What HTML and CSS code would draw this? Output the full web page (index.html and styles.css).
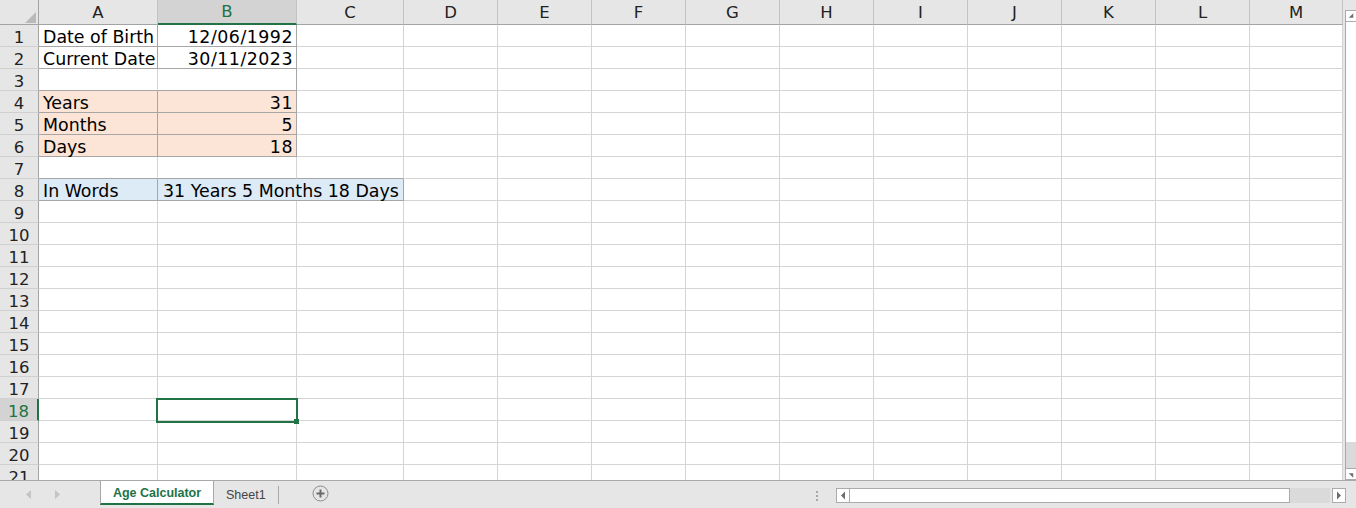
FILE: index.html
```html
<!DOCTYPE html>
<html>
<head>
<meta charset="utf-8">
<link rel="stylesheet" href="styles.css">
</head>
<body>
<div class="app">
  <div class="main">
    <div class="sheet">
      <div class="grid">
        <div class="corner"><svg width="38" height="24" viewBox="0 0 38 24"><polygon points="36,12 36,23 25,23" fill="#b9b9b9"/></svg></div>
        <div class="ch">A</div><div class="ch sel">B</div><div class="ch">C</div><div class="ch">D</div><div class="ch">E</div><div class="ch">F</div><div class="ch">G</div><div class="ch">H</div><div class="ch">I</div><div class="ch">J</div><div class="ch">K</div><div class="ch">L</div><div class="ch">M</div>

        <div class="rh">1</div><div class="c bd">Date of Birth</div><div class="c bd n">12/06/1992</div><div class="c"></div><div class="c"></div><div class="c"></div><div class="c"></div><div class="c"></div><div class="c"></div><div class="c"></div><div class="c"></div><div class="c"></div><div class="c"></div><div class="c"></div>
        <div class="rh">2</div><div class="c bd">Current Date</div><div class="c bd n">30/11/2023</div><div class="c"></div><div class="c"></div><div class="c"></div><div class="c"></div><div class="c"></div><div class="c"></div><div class="c"></div><div class="c"></div><div class="c"></div><div class="c"></div><div class="c"></div>
        <div class="rh">3</div><div class="c bb"></div><div class="c bb br"></div><div class="c"></div><div class="c"></div><div class="c"></div><div class="c"></div><div class="c"></div><div class="c"></div><div class="c"></div><div class="c"></div><div class="c"></div><div class="c"></div><div class="c"></div>
        <div class="rh">4</div><div class="c bd org">Years</div><div class="c bd org n">31</div><div class="c"></div><div class="c"></div><div class="c"></div><div class="c"></div><div class="c"></div><div class="c"></div><div class="c"></div><div class="c"></div><div class="c"></div><div class="c"></div><div class="c"></div>
        <div class="rh">5</div><div class="c bd org">Months</div><div class="c bd org n">5</div><div class="c"></div><div class="c"></div><div class="c"></div><div class="c"></div><div class="c"></div><div class="c"></div><div class="c"></div><div class="c"></div><div class="c"></div><div class="c"></div><div class="c"></div>
        <div class="rh">6</div><div class="c bd org">Days</div><div class="c bd org n">18</div><div class="c"></div><div class="c"></div><div class="c"></div><div class="c"></div><div class="c"></div><div class="c"></div><div class="c"></div><div class="c"></div><div class="c"></div><div class="c"></div><div class="c"></div>
        <div class="rh">7</div><div class="c bb"></div><div class="c bb"></div><div class="c bb"></div><div class="c"></div><div class="c"></div><div class="c"></div><div class="c"></div><div class="c"></div><div class="c"></div><div class="c"></div><div class="c"></div><div class="c"></div><div class="c"></div>
        <div class="rh">8</div><div class="c bd blu">In Words</div><div class="c bd blu merge">31 Years 5 Months 18 Days</div><div class="c"></div><div class="c"></div><div class="c"></div><div class="c"></div><div class="c"></div><div class="c"></div><div class="c"></div><div class="c"></div><div class="c"></div><div class="c"></div>
        <div class="rh">9</div><div class="c"></div><div class="c"></div><div class="c"></div><div class="c"></div><div class="c"></div><div class="c"></div><div class="c"></div><div class="c"></div><div class="c"></div><div class="c"></div><div class="c"></div><div class="c"></div><div class="c"></div>
        <div class="rh">10</div><div class="c"></div><div class="c"></div><div class="c"></div><div class="c"></div><div class="c"></div><div class="c"></div><div class="c"></div><div class="c"></div><div class="c"></div><div class="c"></div><div class="c"></div><div class="c"></div><div class="c"></div>
        <div class="rh">11</div><div class="c"></div><div class="c"></div><div class="c"></div><div class="c"></div><div class="c"></div><div class="c"></div><div class="c"></div><div class="c"></div><div class="c"></div><div class="c"></div><div class="c"></div><div class="c"></div><div class="c"></div>
        <div class="rh">12</div><div class="c"></div><div class="c"></div><div class="c"></div><div class="c"></div><div class="c"></div><div class="c"></div><div class="c"></div><div class="c"></div><div class="c"></div><div class="c"></div><div class="c"></div><div class="c"></div><div class="c"></div>
        <div class="rh">13</div><div class="c"></div><div class="c"></div><div class="c"></div><div class="c"></div><div class="c"></div><div class="c"></div><div class="c"></div><div class="c"></div><div class="c"></div><div class="c"></div><div class="c"></div><div class="c"></div><div class="c"></div>
        <div class="rh">14</div><div class="c"></div><div class="c"></div><div class="c"></div><div class="c"></div><div class="c"></div><div class="c"></div><div class="c"></div><div class="c"></div><div class="c"></div><div class="c"></div><div class="c"></div><div class="c"></div><div class="c"></div>
        <div class="rh">15</div><div class="c"></div><div class="c"></div><div class="c"></div><div class="c"></div><div class="c"></div><div class="c"></div><div class="c"></div><div class="c"></div><div class="c"></div><div class="c"></div><div class="c"></div><div class="c"></div><div class="c"></div>
        <div class="rh">16</div><div class="c"></div><div class="c"></div><div class="c"></div><div class="c"></div><div class="c"></div><div class="c"></div><div class="c"></div><div class="c"></div><div class="c"></div><div class="c"></div><div class="c"></div><div class="c"></div><div class="c"></div>
        <div class="rh">17</div><div class="c"></div><div class="c"></div><div class="c"></div><div class="c"></div><div class="c"></div><div class="c"></div><div class="c"></div><div class="c"></div><div class="c"></div><div class="c"></div><div class="c"></div><div class="c"></div><div class="c"></div>
        <div class="rh rsel">18</div><div class="c"></div><div class="c"></div><div class="c"></div><div class="c"></div><div class="c"></div><div class="c"></div><div class="c"></div><div class="c"></div><div class="c"></div><div class="c"></div><div class="c"></div><div class="c"></div><div class="c"></div>
        <div class="rh">19</div><div class="c"></div><div class="c"></div><div class="c"></div><div class="c"></div><div class="c"></div><div class="c"></div><div class="c"></div><div class="c"></div><div class="c"></div><div class="c"></div><div class="c"></div><div class="c"></div><div class="c"></div>
        <div class="rh">20</div><div class="c"></div><div class="c"></div><div class="c"></div><div class="c"></div><div class="c"></div><div class="c"></div><div class="c"></div><div class="c"></div><div class="c"></div><div class="c"></div><div class="c"></div><div class="c"></div><div class="c"></div>
        <div class="rh">21</div><div class="c"></div><div class="c"></div><div class="c"></div><div class="c"></div><div class="c"></div><div class="c"></div><div class="c"></div><div class="c"></div><div class="c"></div><div class="c"></div><div class="c"></div><div class="c"></div><div class="c"></div>
      </div>
      <div class="selbox"><div class="handle"></div></div>
    </div>
    <div class="vs">
      <div class="vs-in">
        <div class="vbtn"><svg width="11" height="11" viewBox="0 0 11 11"><polygon points="3,7 8,7 8,2" fill="#6d6d6d"/></svg></div>
        <div class="vthumb"></div>
        <div class="vtrack"></div>
        <div class="vbtn down"><svg width="11" height="11" viewBox="0 0 11 11"><polygon points="3,4 8,4 8,9" fill="#6d6d6d"/></svg></div>
      </div>
    </div>
  </div>
  <div class="tabbar">
    <div class="nav">
      <svg width="6" height="9" viewBox="0 0 6 9"><polygon points="5,0 5,9 0,4.5" fill="#c4c4c4"/></svg>
      <svg width="6" height="9" viewBox="0 0 6 9"><polygon points="0,0 0,9 5,4.5" fill="#c4c4c4"/></svg>
    </div>
    <div class="tab active">Age Calculator</div>
    <div class="tab">Sheet1</div>
    <div class="sep"></div>
    <div class="add"><svg width="17" height="17" viewBox="0 0 17 17"><circle cx="8.5" cy="8.5" r="7.5" fill="none" stroke="#8c8c8c" stroke-width="1"/><path d="M8.5 4.5v8M4.5 8.5h8" stroke="#6a6a6a" stroke-width="2"/></svg></div>
    <div class="hwrap">
      <div class="dots"><i></i><i></i><i></i></div>
      <div class="hs">
        <div class="hbtn"><svg width="6" height="9" viewBox="0 0 6 9"><polygon points="5,0.5 5,8.5 1,4.5" fill="#6d6d6d"/></svg></div>
        <div class="hthumb"></div>
        <div class="htrack"></div>
        <div class="hbtn right"><svg width="6" height="9" viewBox="0 0 6 9"><polygon points="1,0.5 1,8.5 5,4.5" fill="#6d6d6d"/></svg></div>
      </div>
    </div>
  </div>
</div>
</body>
</html>
```

FILE: styles.css
```css
* { box-sizing: border-box; margin: 0; padding: 0; }
html, body { width: 1356px; height: 508px; overflow: hidden; background: #fff; }
body { font-family: "DejaVu Sans", sans-serif; color: #000; }

.app { display: flex; flex-direction: column; height: 508px; }
.main { display: flex; height: 480px; overflow: hidden; }
.sheet { position: relative; width: 1343px; height: 480px; overflow: hidden; }

.grid {
  display: grid;
  grid-template-columns: 39px 119px 139px 107px repeat(9, 94px) 93px;
  grid-template-rows: 25px;
  grid-auto-rows: 22px;
}

.corner { background: #e6e6e6; border-right: 1px solid #a3a3a3; border-bottom: 1px solid #a3a3a3; }
.corner svg { display: block; }

.ch {
  background: #e6e6e6;
  border-right: 1px solid #c3c3c3;
  border-bottom: 1px solid #a3a3a3;
  text-align: center;
  font-size: 16.5px;
  line-height: 24px;
  padding-top: 1px;
  color: #222;
}
.ch.sel { background: #d3d3d3; border-bottom: 2px solid #217346; color: #217346; line-height: 22px; }

.rh {
  background: #e6e6e6;
  border-right: 1px solid #a3a3a3;
  border-bottom: 1px solid #d0d0d0;
  text-align: center;
  font-size: 16.5px;
  line-height: 21px;
  padding-top: 2px;
  color: #222;
}
.rh.rsel { background: #d3d3d3; border-right: 2px solid #217346; color: #217346; }

.c {
  border-right: 1px solid #d4d4d4;
  border-bottom: 1px solid #d4d4d4;
  font-size: 17.4px;
  line-height: 21px;
  padding: 2px 4px 0;
  white-space: nowrap;
}
.c.n { text-align: right; padding-right: 3px; letter-spacing: 0.5px; }
.c.bd { border-right-color: #a6a6a6; border-bottom-color: #a6a6a6; }
.c.bb { border-bottom-color: #a6a6a6; }
.c.br { border-right-color: #a6a6a6; }
.c.org { background: #fce4d6; }
.c.blu { background: #ddebf7; }
.c.merge { grid-column: span 2; padding-left: 5px; }

.selbox {
  position: absolute;
  left: 156px;
  top: 398px;
  width: 142px;
  height: 25px;
  border: 2px solid #217346;
}
.handle {
  position: absolute;
  left: 136px;
  top: 19px;
  width: 5px;
  height: 5px;
  background: #217346;
}

.vs { width: 13px; height: 480px; background: #e6e6e6; padding-left: 2px; padding-top: 10px; }
.vs-in { display: flex; flex-direction: column; height: 470px; border-left: 1px solid #ababab; }
.vbtn { height: 12px; background: #fff; border-top: 1px solid #ababab; border-bottom: 1px solid #ababab; display: flex; align-items: center; justify-content: center; }
.vbtn svg { display: block; }
.vthumb { height: 420px; background: #fff; }
.vtrack { flex: 1; background: #dadada; }

.tabbar {
  height: 28px;
  background: #e6e6e6;
  border-top: 1px solid #a9a9a9;
  display: flex;
  align-items: flex-start;
  font-family: "Liberation Sans", sans-serif;
}
.nav { width: 100px; height: 27px; display: flex; align-items: center; padding-left: 26px; gap: 23px; }
.nav svg { display: block; }

.tab {
  height: 24px;
  padding: 2px 12px 0;
  font-size: 12.5px;
  line-height: 24px;
  color: #444;
  white-space: nowrap;
}
.tab.active {
  width: 114px;
  background: #fff;
  border-left: 1px solid #a9a9a9;
  border-right: 1px solid #a9a9a9;
  border-bottom: 2px solid #217346;
  color: #217346;
  font-weight: bold;
  text-align: center;
  padding: 2px 0 0;
  line-height: 20px;
}
.sep { width: 1px; height: 18px; margin-top: 5px; background: #a9a9a9; }
.add { margin-left: 33px; margin-top: 4px; }
.add svg { display: block; }

.hwrap { margin-left: auto; display: flex; align-items: center; height: 27px; padding-right: 10px; }
.dots { display: flex; flex-direction: column; gap: 2px; margin-right: 18px; margin-top: 2px; }
.dots i { display: block; width: 2px; height: 2px; background: #a8a8a8; }
.hs { display: flex; width: 510px; height: 15px; margin-top: 1px; }
.hbtn { width: 14px; height: 15px; background: #fff; border: 1px solid #ababab; display: flex; align-items: center; justify-content: center; }
.hbtn svg { display: block; }
.hthumb { width: 440px; height: 15px; background: #fff; border: 1px solid #ababab; border-left: none; }
.htrack { flex: 1; background: #dadada; margin-right: 2px; }
```
